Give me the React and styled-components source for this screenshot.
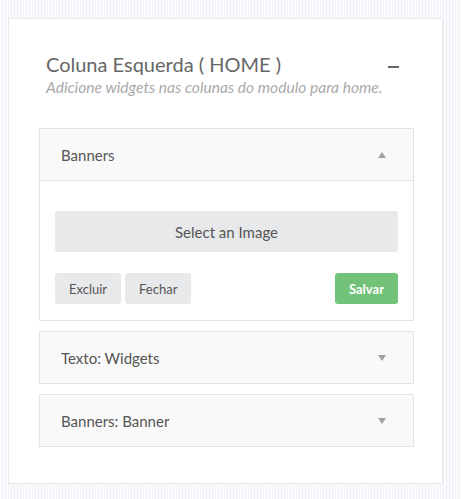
import React, { useState } from "react";
import styled, { createGlobalStyle } from "styled-components";

const GlobalStyle = createGlobalStyle`
  html, body {
    margin: 0;
    padding: 0;
  }
  body {
    font-family: Lato, "Liberation Sans", sans-serif;
    background-color: #f8f9fa;
    background-image: repeating-linear-gradient(
      90deg,
      #f9fafb 0px,
      #f9fafb 2px,
      #f0f2f5 2px,
      #f0f2f5 3px
    );
    min-height: 499px;
  }
`;

const Page = styled.div`
  padding: 18px 0 0 8px;
`;

const Card = styled.div`
  width: 435px;
  box-sizing: border-box;
  background: #fff;
  border: 1px solid #e8e9ec;
  padding: 30px 28px 36px 30px;
`;

const Head = styled.div`
  display: flex;
  justify-content: space-between;
  align-items: flex-start;
  padding: 3px 15px 0 7px;
  margin-bottom: 31px;
`;

const Title = styled.h3`
  margin: 0;
  font-size: 20px;
  font-weight: 400;
  color: #666;
  line-height: 25px;
`;

const Subtitle = styled.p`
  margin: 0;
  font-size: 15.6px;
  font-style: italic;
  color: #aaa;
  line-height: 20px;
`;

const Minus = styled.span`
  display: block;
  width: 11px;
  height: 2px;
  background: #666;
  margin-top: 14px;
`;

const Panel = styled.div`
  border: 1px solid #e4e4e4;
  background: #fff;
  & + & {
    margin-top: 10px;
  }
`;

const PanelHeader = styled.div`
  display: flex;
  justify-content: space-between;
  align-items: center;
  height: 51px;
  padding: 0 27px 0 21px;
  background: #f9f9f9;
  border-bottom: ${(p) => (p.open ? "1px solid #e4e4e4" : "none")};
  font-size: 15px;
  color: #555;
  cursor: pointer;
`;

const Caret = styled.span`
  width: 0;
  height: 0;
  border-left: 4px solid transparent;
  border-right: 4px solid transparent;
  ${(p) =>
    p.up
      ? "border-bottom: 6px solid #a0a0a0;"
      : "border-top: 6px solid #a0a0a0;"}
`;

const PanelBody = styled.div`
  padding: 30px 15px 16px;
`;

const ImageButton = styled.button`
  display: block;
  width: 100%;
  height: 41px;
  border: none;
  border-radius: 3px;
  background: #e8e9eb;
  font-family: inherit;
  font-size: 15px;
  color: #555;
  cursor: pointer;
`;

const Actions = styled.div`
  display: flex;
  gap: 4px;
  margin-top: 21px;
`;

const Button = styled.button`
  height: 31px;
  padding: 0 14px;
  border: none;
  border-radius: 3px;
  font-family: inherit;
  font-size: 13px;
  background: ${(p) => (p.primary ? "#72c279" : "#e8e9eb")};
  color: ${(p) => (p.primary ? "#fff" : "#555")};
  font-weight: ${(p) => (p.primary ? 700 : 400)};
  margin-left: ${(p) => (p.primary ? "auto" : "0")};
  cursor: pointer;
`;

const panels = ["Banners", "Texto: Widgets", "Banners: Banner"];

export default function App() {
  const [open, setOpen] = useState(0);
  return (
    <Page>
      <GlobalStyle />
      <Card>
        <Head>
          <div>
            <Title>Coluna Esquerda ( HOME )</Title>
            <Subtitle>Adicione widgets nas colunas do modulo para home.</Subtitle>
          </div>
          <Minus />
        </Head>
        {panels.map((name, i) => (
          <Panel key={name}>
            <PanelHeader open={open === i} onClick={() => setOpen(open === i ? -1 : i)}>
              {name}
              <Caret up={open === i} />
            </PanelHeader>
            {open === i && (
              <PanelBody>
                <ImageButton>Select an Image</ImageButton>
                <Actions>
                  <Button>Excluir</Button>
                  <Button>Fechar</Button>
                  <Button primary>Salvar</Button>
                </Actions>
              </PanelBody>
            )}
          </Panel>
        ))}
      </Card>
    </Page>
  );
}
